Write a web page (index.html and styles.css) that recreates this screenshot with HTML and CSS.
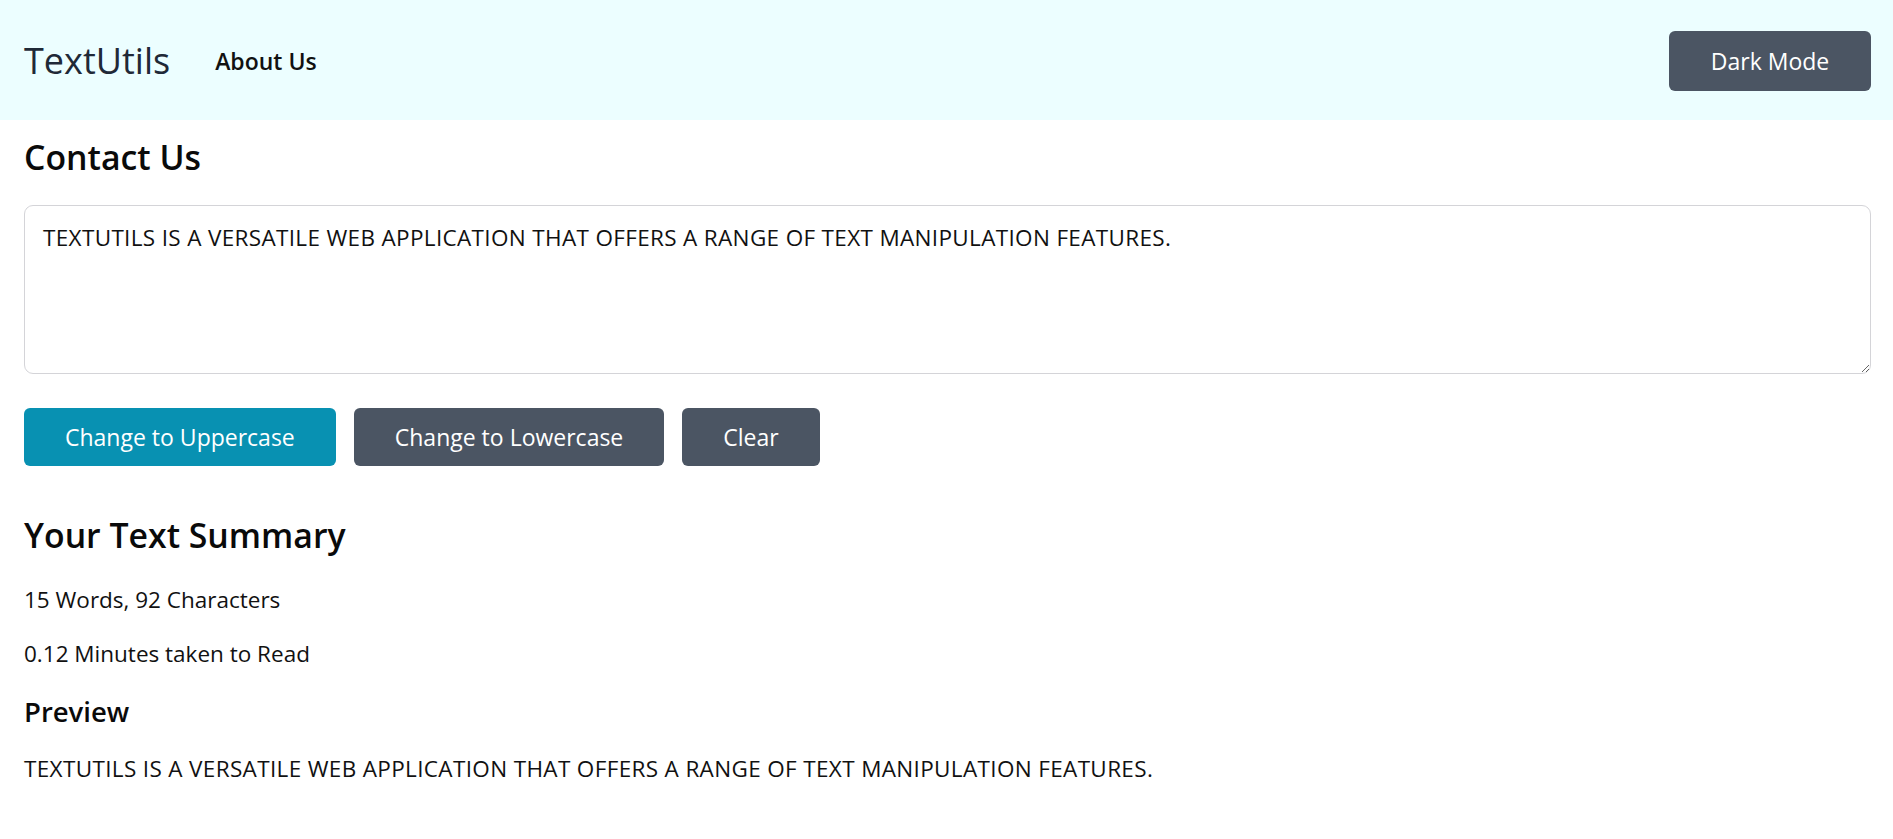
FILE: index.html
```html
<!DOCTYPE html>
<html lang="en">
<head>
<meta charset="utf-8">
<title>TextUtils</title>
<link rel="stylesheet" href="styles.css">
</head>
<body>
<nav class="navbar">
  <a class="brand" href="#">TextUtils</a>
  <a class="nav-link" href="#">About Us</a>
  <button class="btn btn-dark btn-mode">Dark Mode</button>
</nav>
<main class="container">
  <h2 class="heading">Contact Us</h2>
  <textarea class="textbox">TEXTUTILS IS A VERSATILE WEB APPLICATION THAT OFFERS A RANGE OF TEXT MANIPULATION FEATURES.</textarea>
  <div class="actions">
    <button class="btn btn-primary">Change to Uppercase</button>
    <button class="btn btn-dark">Change to Lowercase</button>
    <button class="btn btn-dark">Clear</button>
  </div>
  <h2 class="heading summary">Your Text Summary</h2>
  <p class="line first">15 Words, 92 Characters</p>
  <p class="line second">0.12 Minutes taken to Read</p>
  <h3 class="subheading">Preview</h3>
  <p class="line preview">TEXTUTILS IS A VERSATILE WEB APPLICATION THAT OFFERS A RANGE OF TEXT MANIPULATION FEATURES.</p>
</main>
</body>
</html>
```
FILE: styles.css
```css
* { box-sizing: border-box; }
html, body { margin: 0; padding: 0; }
body {
  font-family: "Open Sans", "Noto Sans", sans-serif;
  font-size: 22.5px;
  line-height: 36px;
  color: #111111;
  background: #ffffff;
}
.navbar {
  height: 120px;
  background: #ecfeff;
  display: flex;
  align-items: center;
  padding: 0 22px 0 24px;
}
.brand {
  font-size: 36px;
  line-height: 44px;
  color: #1f2937;
  text-decoration: none;
  font-weight: 500;
  margin-top: 2px;
}
.nav-link {
  margin-left: 45px;
  font-size: 23px;
  font-weight: 600;
  color: #111111;
  text-decoration: none;
  margin-top: 2px;
}
.btn {
  font-family: inherit;
  font-size: 23px;
  line-height: 36px;
  border: 0;
  border-radius: 6px;
  color: #ffffff;
  height: 58px;
  padding: 0 41px;
  cursor: pointer;
}
.btn-dark { background: #4b5563; }
.btn-primary { background: #0891b2; }
.btn-mode {
  margin-left: auto;
  width: 202px;
  height: 60px;
  padding: 0;
  margin-top: 2px;
}
.container {
  padding: 0 22px 0 24px;
  display: flex;
  flex-direction: column;
  align-items: flex-start;
}
.heading {
  font-size: 33.8px;
  line-height: 43px;
  font-weight: 600;
  margin: 16px 0 0 0;
  color: #0a0a0a;
}
.textbox {
  display: block;
  width: 100%;
  height: 169px;
  margin-top: 26px;
  border: 1px solid #d4d4d8;
  border-radius: 9px;
  padding: 14px 18px 9px;
  font-family: inherit;
  font-size: 22.5px;
  line-height: 36px;
  letter-spacing: 0.34px;
  color: #111111;
  resize: vertical;
  outline: none;
}
.actions {
  display: flex;
  gap: 18px;
  margin-top: 34px;
}
.summary { margin-top: 48px; }
.line { margin: 0; }
.first { margin-top: 25px; }
.second { margin-top: 18px; }
.subheading {
  font-size: 27.5px;
  line-height: 34px;
  font-weight: 600;
  margin: 23px 0 0 0;
  color: #0a0a0a;
}
.preview {
  margin-top: 22px;
  letter-spacing: 0.35px;
}
```
